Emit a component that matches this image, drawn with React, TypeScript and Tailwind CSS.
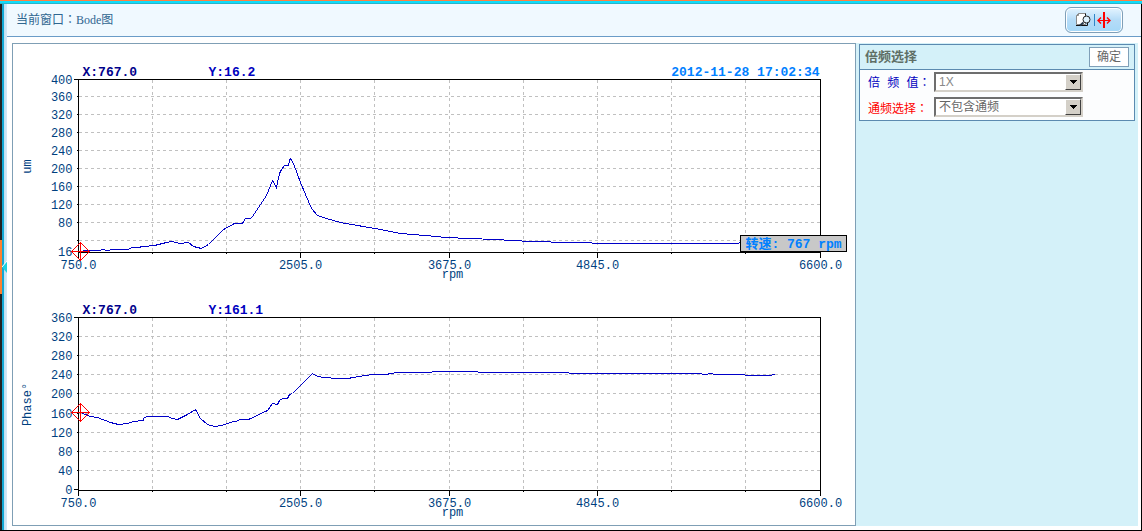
import { useState } from "react";

type Point = [number, number];

interface ChartProps {
    title: string;
    unit: string;
    yValue: string;
    time?: string;
    rows: { y: number; label: string }[];
    points: Point[];
    marker: Point;
    tip?: string;
}

const PLOT_W = 742;
const PLOT_H = 173;

const columns = [
    { x: 0, label: "750.0" },
    { x: 74, label: "" },
    { x: 148, label: "" },
    { x: 222, label: "2505.0" },
    { x: 296, label: "" },
    { x: 371, label: "3675.0" },
    { x: 445, label: "" },
    { x: 519, label: "4845.0" },
    { x: 593, label: "" },
    { x: 667, label: "" },
    { x: 742, label: "6600.0" },
];

const amplitudeRows = [
    { y: 0, label: "400" },
    { y: 17, label: "360" },
    { y: 35, label: "320" },
    { y: 53, label: "280" },
    { y: 71, label: "240" },
    { y: 89, label: "200" },
    { y: 107, label: "160" },
    { y: 125, label: "120" },
    { y: 143, label: "80" },
    { y: 161, label: "" },
    { y: 172, label: "16" },
];

const phaseRows = [
    { y: 0, label: "360" },
    { y: 19, label: "320" },
    { y: 38, label: "280" },
    { y: 57, label: "240" },
    { y: 76, label: "200" },
    { y: 96, label: "160" },
    { y: 115, label: "120" },
    { y: 134, label: "80" },
    { y: 153, label: "40" },
    { y: 172, label: "0" },
];

const amplitude: Point[] = [
    [2, 172], [7, 171], [22, 171], [23, 170], [29, 171], [34, 170], [49, 170], [54, 168], [59, 168],
    [65, 167], [76, 166], [80, 165], [88, 163], [93, 162], [102, 164], [110, 163], [115, 167],
    [123, 169], [130, 165], [134, 161], [145, 150], [156, 144], [164, 144], [167, 139], [172, 139],
    [174, 137], [188, 116], [194, 101], [198, 108], [201, 94], [203, 90], [206, 86], [210, 86],
    [211, 81], [212, 79], [215, 84], [222, 103], [227, 115], [233, 129], [239, 136], [248, 139],
    [262, 143], [302, 150], [322, 154], [347, 156], [367, 158], [416, 160], [452, 162], [492, 163],
    [534, 164], [659, 164], [662, 163],
];

const phase: Point[] = [
    [2, 95], [7, 97], [12, 99], [19, 100], [32, 105], [40, 107], [49, 106], [55, 104], [65, 103],
    [65, 101], [68, 99], [89, 99], [94, 101], [99, 102], [109, 97], [117, 92], [122, 101],
    [129, 107], [136, 109], [143, 108], [155, 104], [158, 104], [161, 102], [170, 102], [189, 93],
    [194, 86], [199, 87], [201, 83], [204, 81], [209, 81], [211, 77], [214, 76], [234, 56],
    [239, 59], [245, 60], [259, 61], [269, 61], [275, 60], [287, 58], [295, 57], [307, 57],
    [319, 55], [353, 55], [354, 54], [399, 54], [400, 55], [490, 55], [491, 56], [623, 56],
    [624, 57], [629, 57], [630, 56], [634, 56], [635, 57], [666, 57], [667, 58], [693, 58],
    [694, 57], [696, 57],
];

const BodeChart = ({ title, unit, yValue, time, rows, points, marker, tip }: ChartProps) => {
    const [mx, my] = marker;

    return (
        <svg
            viewBox="0 0 842 238"
            role="img"
            aria-label={title}
            className="block w-full font-['Liberation_Mono','Noto_Sans_CJK_SC',monospace] text-[12px]"
        >
            <g transform="translate(65.5 35.5)">
                <g shapeRendering="crispEdges" fill="none">
                    {/* grid */}
                    <g stroke="#c0c0c0" strokeDasharray="3 3">
                        {rows.slice(1, -1).map((row) => (
                            <line key={row.y} x1={0} x2={PLOT_W} y1={row.y} y2={row.y} />
                        ))}
                        {columns.slice(1, -1).map((col) => (
                            <line key={col.x} x1={col.x} x2={col.x} y1={0} y2={PLOT_H} />
                        ))}
                    </g>

                    {/* axes and ticks */}
                    <g stroke="#000000">
                        <rect x={0} y={0} width={PLOT_W} height={PLOT_H} />
                        {rows.map((row, i) => (
                            <line
                                key={row.y}
                                x1={i === 0 || i === rows.length - 1 ? -5 : -2}
                                x2={0}
                                y1={row.y}
                                y2={row.y}
                            />
                        ))}
                        {columns.map((col) => (
                            <line
                                key={col.x}
                                x1={col.x}
                                x2={col.x}
                                y1={PLOT_H}
                                y2={PLOT_H + (col.label ? 5 : 1)}
                            />
                        ))}
                    </g>

                    <polyline points={points.map((p) => p.join(",")).join(" ")} stroke="#0000c8" />
                </g>

                <g fill="#003f7f">
                    {rows.map((row) => (
                        <text key={row.y} x={-6} y={row.y + 4} textAnchor="end">{row.label}</text>
                    ))}
                    {columns.map((col) => (
                        <text key={col.x} x={col.x} y={189} textAnchor="middle">{col.label}</text>
                    ))}
                    <text x={374} y={198} textAnchor="middle">rpm</text>
                    <text transform="translate(-48 87) rotate(-90)" textAnchor="middle">{unit}</text>
                </g>

                {/* cursor */}
                <g shapeRendering="crispEdges" fill="none" stroke="#ff0000">
                    <path d={`M${mx - 9} ${my}h18M${mx} ${my - 9}v18`} />
                    <path d={`M${mx - 9} ${my}l9 -9l9 9l-9 9z`} />
                </g>

                <g className="text-[13px] font-bold">
                    <text x={4} y={-4} fill="#00008b">X:767.0</text>
                    <text x={130} y={-4} fill="#0000c0">{yValue}</text>
                    {time && <text x={741} y={-4} fill="#0080ff" textAnchor="end">{time}</text>}
                </g>

                {tip && (
                    <g>
                        <rect x={662} y={156} width={106} height={16} fill="#c8c8c8" stroke="#000000" />
                        <text x={715} y={168} fill="#0080ff" textAnchor="middle" className="text-[13px] font-bold">{tip}</text>
                    </g>
                )}
            </g>
        </svg>
    );
};

// the TC face centres the full-width colon in its cell
const Colon = () => <span className="font-['Noto_Sans_CJK_TC',sans-serif] leading-none">：</span>;

interface PickerProps {
    id: string;
    value: string;
    options: string[];
    onChange: (value: string) => void;
    className: string;
}

const Picker = ({ id, value, options, onChange, className }: PickerProps) => {
    return (
        <div className="relative h-5 w-[149px]">
            <select
                id={id}
                value={value}
                onChange={(e) => onChange(e.target.value)}
                className={`block h-5 w-full appearance-none border-2 border-t-[#6e6e6e] border-l-[#6e6e6e] border-r-[#d4d0c8] border-b-[#d4d0c8] bg-white pl-[3px] text-[12px] leading-4 ${className}`}
            >
                {options.map((option) => (
                    <option key={option}>{option}</option>
                ))}
            </select>
            <span className="pointer-events-none absolute top-0.5 right-0.5 flex h-4 w-4 items-center justify-center border border-t-white border-l-white border-r-[#404040] border-b-[#404040] bg-[#d4d0c8]">
                <svg width="7" height="4" viewBox="0 0 7 4" shapeRendering="crispEdges">
                    <path d="M0 0h7v1h-1v1h-1v1h-1v1h-1v-1h-1v-1h-1v-1h-1z" fill="#000000" />
                </svg>
            </span>
        </div>
    );
};

const PageSearchIcon = () => (
    <svg width="16" height="16" viewBox="0 0 16 16" aria-hidden="true">
        <path d="M3.5 1.5h7v11h-9v-9z" fill="#ffffff" stroke="#8a8a8a" />
        <path d="M1.5 3.5h2v-2" fill="none" stroke="#8a8a8a" />
        <path d="M1 13.5h11.5V11M10.5 1.5v2" fill="none" stroke="#111111" />
        <path d="M8.5 10.5L5 13.5" stroke="#26384a" strokeWidth="2" />
        <circle cx="11.5" cy="7.5" r="3.5" fill="#dff3ff" stroke="#222222" />
    </svg>
);

const SplitCursorIcon = () => (
    <svg width="14" height="16" viewBox="0 0 14 16" aria-hidden="true" fill="none" stroke="#ff0000">
        <path d="M7 0v16" strokeWidth="2" />
        <path d="M1 8.5h12" />
        <path d="M4 5.5l-3 3l3 3M10 5.5l3 3l-3 3" strokeWidth="1.4" />
    </svg>
);

const App = () => {
    const [multiple, setMultiple] = useState("1X");
    const [passband, setPassband] = useState("不包含通频");

    return (
        <div className="border-t border-[#ff8040] bg-white font-['Liberation_Sans','Noto_Sans_CJK_SC',sans-serif] text-[12px]">
            <div className="h-[3px] border-b border-[#2bb5c8] bg-[#10dcfa]"></div>

            <div className="flex border-r border-b border-black">
                {/* collapse handle of the left menu */}
                <div className="flex w-[7px] shrink-0 bg-linear-to-r from-[#a9cfe6] to-[#d2e9f7]">
                    <div className="flex w-0.5 flex-col bg-[#222222]">
                        <div className="flex-1"></div>
                        <div className="h-[54px] bg-[#ff8030]"></div>
                        <div className="flex-1"></div>
                    </div>
                    <button type="button" aria-label="收起菜单" className="flex w-[3px] items-center border-l-2 border-[#12a8d4]">
                        <svg width="5" height="12" viewBox="0 0 5 12" className="-ml-0.5 shrink-0">
                            <path d="M5 0v12L0 6z" fill="#20d0e0" />
                            <path d="M5 0L0 6" stroke="#ffffff" />
                        </svg>
                    </button>
                </div>

                <div className="min-w-0 flex-1">
                    <header className="flex h-[33px] items-center justify-between border-b border-[#6a9cc8] bg-[#f0f9ff] pr-[18px] pl-[9px]">
                        <h1 className="font-['Liberation_Serif','Noto_Sans_CJK_SC',serif] text-[12px] text-[#2f6690]">
                            当前窗口<Colon />Bode图
                        </h1>
                        <div className="flex h-[26px] w-[58px] items-center justify-center gap-0.5 rounded-md border border-[#7f9fb8] bg-linear-to-b from-[#e4f4ff] via-[#b5dcf8] to-[#a5d8f8] pr-0.5 ring-1 ring-white ring-inset">
                            <button type="button" aria-label="查看"><PageSearchIcon /></button>
                            <span className="ml-px h-3 w-px bg-[#2f86c8]"></span>
                            <button type="button" aria-label="光标"><SplitCursorIcon /></button>
                        </div>
                    </header>

                    <main className="flex pt-1.5 pr-[3px] pb-1 pl-[5px]">
                        <section className="min-w-0 flex-1 border border-[#7f9fb5] bg-white pb-[5px]">
                            <BodeChart
                                title="幅值"
                                unit="um"
                                yValue="Y:16.2"
                                time="2012-11-28 17:02:34"
                                rows={amplitudeRows}
                                points={amplitude}
                                marker={[2, 172]}
                                tip="转速: 767 rpm"
                            />
                            <BodeChart
                                title="相位"
                                unit="Phase°"
                                yValue="Y:161.1"
                                rows={phaseRows}
                                points={phase}
                                marker={[2, 95]}
                            />
                        </section>

                        <aside className="w-[282px] shrink-0 bg-[#d4f1f9] px-[3px] pt-px">
                            <form className="border border-[#5b8ab0] bg-[#fcfdfe]" onSubmit={(e) => e.preventDefault()}>
                                <div className="flex h-[25px] items-center justify-between border-b border-[#5b8ab0] bg-[#d4f1f9] pr-[5px] pl-[5px]">
                                    <h2 className="text-[13px] font-bold text-[#5f6f66]">倍频选择</h2>
                                    <button type="submit" className="h-5 w-10 border border-[#7f9fb8] bg-white text-[12px] leading-4 text-[#666666]">
                                        确定
                                    </button>
                                </div>
                                <div className="flex flex-col gap-[5px] pt-0.5 pb-[3px] pl-2">
                                    <div className="flex h-5">
                                        <label htmlFor="multiple" className="w-[66px] pt-1 font-['Liberation_Mono','Noto_Sans_CJK_SC',monospace] leading-4 whitespace-nowrap text-[#0000c0]">
                                            倍 频 值<Colon />
                                        </label>
                                        <Picker
                                            id="multiple"
                                            value={multiple}
                                            options={["1X", "2X", "3X"]}
                                            onChange={setMultiple}
                                            className="text-[#888888]"
                                        />
                                    </div>
                                    <div className="flex h-5">
                                        <label htmlFor="passband" className="w-[66px] pt-1 leading-4 whitespace-nowrap text-[#ff0000]">
                                            通频选择<Colon />
                                        </label>
                                        <Picker
                                            id="passband"
                                            value={passband}
                                            options={["不包含通频", "包含通频"]}
                                            onChange={setPassband}
                                            className="text-[#666666]"
                                        />
                                    </div>
                                </div>
                            </form>
                        </aside>
                    </main>
                </div>
            </div>
        </div>
    );
};

export default App;
